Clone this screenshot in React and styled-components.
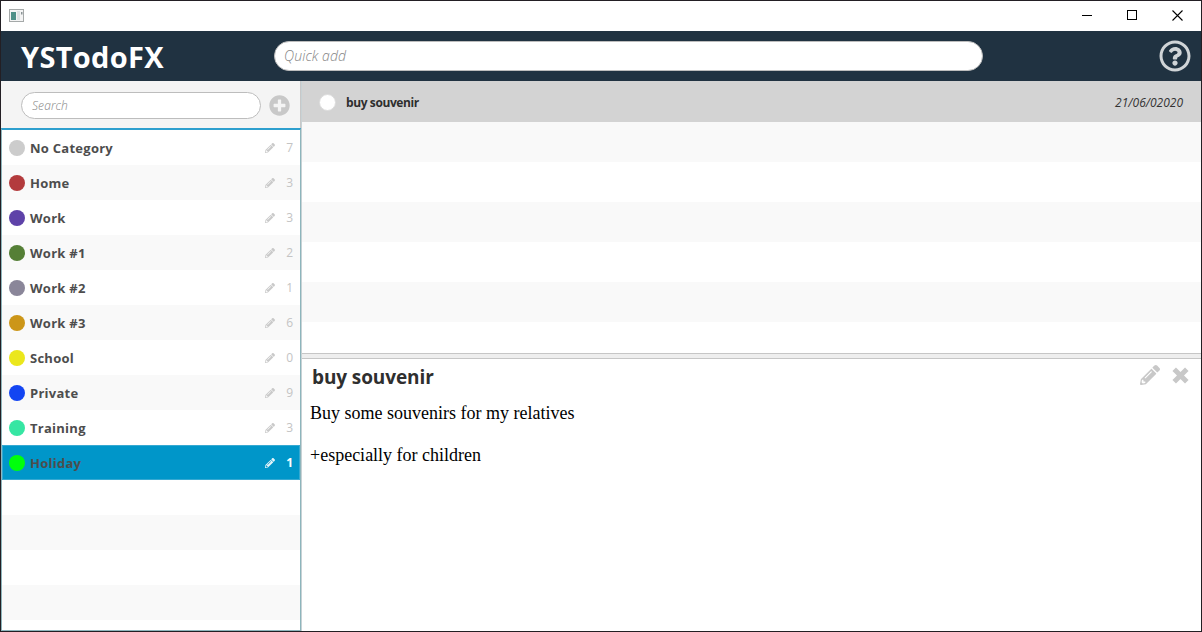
import React from "react";
import styled, { createGlobalStyle } from "styled-components";
import { FaPencilAlt, FaPlusCircle, FaRegQuestionCircle } from "react-icons/fa";

const GlobalStyle = createGlobalStyle`
  * { box-sizing: border-box; }
  body { margin: 0; background: #fff; }
  input, button { font: inherit; }
`;

const Window = styled.div`
  width: 1202px;
  height: 632px;
  border: 1px solid #231f24;
  display: flex;
  flex-direction: column;
  overflow: hidden;
  background: #fff;
  font-family: "Open Sans", "Noto Sans", sans-serif;
  color: #333;
`;

const TitleBar = styled.div`
  height: 30px;
  flex: none;
  display: flex;
  align-items: center;
  justify-content: space-between;
  padding: 0 18px 2px 8px;
`;

const WindowControls = styled.div`
  display: flex;
  align-items: center;
  gap: 35px;
  svg { display: block; }
`;

const Header = styled.header`
  height: 50px;
  flex: none;
  display: flex;
  align-items: center;
  background: #203241;
  padding: 0 10px 0 20px;
`;

const Brand = styled.h1`
  margin: 0;
  width: 253px;
  color: #fff;
  font-size: 29px;
  font-weight: 700;
  line-height: 50px;
  padding-top: 1px;
  letter-spacing: 0.3px;
`;

const Field = styled.input`
  width: ${(p) => p.$width}px;
  height: ${(p) => p.$height}px;
  padding: 0 9px 1px ${(p) => p.$inset}px;
  border: 1px solid #bdbdbd;
  border-radius: 15px;
  background: #fff;
  outline: none;
  font-size: ${(p) => p.$size}px;
  font-style: italic;
  font-weight: 300;
  letter-spacing: 0.1px;
  &::placeholder { color: #858585; opacity: 1; }
`;

const IconButton = styled.button`
  display: flex;
  padding: 0;
  border: 0;
  background: none;
  color: ${(p) => p.$color || "#c8c8c8"};
  font-size: ${(p) => p.$size}px;
`;

const HelpButton = styled(IconButton)`
  margin-left: auto;
`;

const Body = styled.div`
  flex: 1;
  min-height: 0;
  display: flex;
`;

const Sidebar = styled.aside`
  width: 300px;
  flex: none;
  display: flex;
  flex-direction: column;
`;

const SearchBar = styled.div`
  height: 47px;
  flex: none;
  display: flex;
  align-items: center;
  gap: 8px;
  padding: 2px 0 0 20px;
  background: #f4f4f4;
  border-right: 1px solid #c8c8c8;
`;

const CategoryList = styled.div`
  flex: 1;
  min-height: 0;
  overflow: hidden;
  border: 1px solid #8db5bc;
  border-top: 2px solid #2d9fce;
`;

const CategoryRow = styled.div`
  height: 35px;
  display: flex;
  align-items: center;
  padding: 0 7px;
  background: ${(p) => (p.$selected ? "#0096c9" : p.$striped ? "#f9f9f9" : "#fff")};
  box-shadow: ${(p) => (p.$selected ? "inset 0 0 0 1px #36a9d2" : "none")};
  color: ${(p) => (p.$selected ? "#fff" : "#c4c4c4")};
`;

const Dot = styled.span`
  width: 16px;
  height: 16px;
  flex: none;
  border-radius: 50%;
  background: ${(p) => p.$color};
`;

const CategoryName = styled.span`
  margin-left: 5px;
  flex: 1;
  color: #4d4d4d;
  font-size: 13px;
  font-weight: 700;
  line-height: 20px;
  letter-spacing: 0.26px;
`;

const EditMark = styled.span`
  display: flex;
  font-size: 10px;
  opacity: 0.9;
`;

const Count = styled.span`
  width: 18px;
  text-align: right;
  font-size: 12px;
  font-weight: ${(p) => (p.$selected ? 700 : 400)};
`;

const Main = styled.main`
  flex: 1;
  min-width: 0;
  display: flex;
  flex-direction: column;
  border-left: 1px solid #c8d2d5;
`;

const TaskList = styled.div`
  height: 272px;
  flex: none;
  overflow: hidden;
`;

const TaskRow = styled.div`
  height: 41px;
  display: flex;
  align-items: center;
  padding: 2px 18px 0 17px;
  background: #d3d3d3;
`;

const Check = styled.span`
  width: 17px;
  height: 17px;
  border-radius: 50%;
  border: 1px solid #dcdcdc;
  background: #fff;
`;

const TaskName = styled.span`
  margin-left: 10px;
  flex: 1;
  font-size: 12px;
  font-weight: 700;
  color: #2e2e2e;
  letter-spacing: -0.4px;
`;

const TaskDate = styled.span`
  font-size: 12px;
  font-style: italic;
  color: #333;
`;

const EmptyRow = styled.div`
  height: 40px;
  background: ${(p) => (p.$striped ? "#f9f9f9" : "#fff")};
`;

const Splitter = styled.div`
  height: 6px;
  flex: none;
  border: solid #c6c6c6;
  border-width: 1px 0;
  background: #eee;
`;

const DetailHeader = styled.div`
  display: flex;
  align-items: center;
  height: 34px;
  padding: 2px 12px 0 10px;
`;

const DetailTitle = styled.h2`
  margin: 0;
  flex: 1;
  font-size: 19px;
  line-height: 30px;
  font-weight: 700;
  color: #2f2f2f;
  letter-spacing: -0.1px;
`;

const DetailActions = styled.div`
  display: flex;
  align-items: center;
  gap: 12px;
  padding-bottom: 4px;
`;

const DetailText = styled.div`
  padding: 10px 8px;
  font-family: "Liberation Serif", serif;
  font-size: 18px;
  line-height: 21px;
  color: #000;
  white-space: pre-line;
`;

const categories = [
  ["No Category", "#cccccc", 7],
  ["Home", "#b33b3d", 3],
  ["Work", "#5e42a8", 3],
  ["Work #1", "#557f36", 2],
  ["Work #2", "#8a8699", 1],
  ["Work #3", "#cc9618", 6],
  ["School", "#ebe71c", 0],
  ["Private", "#1345f2", 9],
  ["Training", "#36e6a3", 3],
  ["Holiday", "#00ff0c", 1],
];

const AppIcon = () => (
  <svg width="15" height="13" viewBox="0 0 15 13">
    <rect x="0.5" y="0.5" width="14" height="12" fill="#f4f4f4" stroke="#a5a9a9" />
    <rect x="2" y="3" width="5" height="8" fill="#4f9088" />
    <rect x="8" y="2" width="3" height="9" fill="#dfe3e4" />
    <rect x="12" y="3" width="1.5" height="2.5" fill="#8a9496" />
  </svg>
);

const CrossIcon = () => (
  <svg width="17" height="17" viewBox="0 0 17 17">
    <path d="M2.2 2.2L14.8 14.8M14.8 2.2L2.2 14.8" stroke="currentColor" strokeWidth="5" />
  </svg>
);

export default function App() {
  return (
    <>
      <GlobalStyle />
      <Window>
        <TitleBar>
          <AppIcon />
          <WindowControls>
            <svg width="10" height="10"><path d="M0 5.5H10" stroke="#000" /></svg>
            <svg width="10" height="10"><rect x=".5" y=".5" width="9" height="9" fill="none" stroke="#000" /></svg>
            <svg width="11" height="11"><path d="M.5 .5L10.5 10.5M10.5 .5L.5 10.5" stroke="#000" strokeWidth="1.1" /></svg>
          </WindowControls>
        </TitleBar>
        <Header>
          <Brand>YSTodoFX</Brand>
          <Field $width={709} $height={30} $size={14} $inset={9} placeholder="Quick add" />
          <HelpButton $size={32} $color="#d0d4d7" aria-label="Help"><FaRegQuestionCircle /></HelpButton>
        </Header>
        <Body>
          <Sidebar>
            <SearchBar>
              <Field $width={240} $height={27} $size={12} $inset={10} placeholder="Search" />
              <IconButton $size={21} aria-label="Add category"><FaPlusCircle /></IconButton>
            </SearchBar>
            <CategoryList>
              {categories.map(([name, color, count], i) => {
                const selected = name === "Holiday";
                return (
                  <CategoryRow key={name} $striped={i % 2 === 1} $selected={selected}>
                    <Dot $color={color} />
                    <CategoryName>{name}</CategoryName>
                    <EditMark><FaPencilAlt /></EditMark>
                    <Count $selected={selected}>{count}</Count>
                  </CategoryRow>
                );
              })}
              {[0, 1, 2, 3, 4].map((i) => <CategoryRow key={i} $striped={i % 2 === 1} />)}
            </CategoryList>
          </Sidebar>
          <Main>
            <TaskList>
              <TaskRow>
                <Check />
                <TaskName>buy souvenir</TaskName>
                <TaskDate>21/06/02020</TaskDate>
              </TaskRow>
              {[0, 1, 2, 3, 4, 5].map((i) => <EmptyRow key={i} $striped={i % 2 === 0} />)}
            </TaskList>
            <Splitter />
            <DetailHeader>
              <DetailTitle>buy souvenir</DetailTitle>
              <DetailActions>
                <IconButton $size={20} aria-label="Edit"><FaPencilAlt /></IconButton>
                <IconButton $size={17} aria-label="Delete"><CrossIcon /></IconButton>
              </DetailActions>
            </DetailHeader>
            <DetailText>{"Buy some souvenirs for my relatives\n\n+especially for children"}</DetailText>
          </Main>
        </Body>
      </Window>
    </>
  );
}
